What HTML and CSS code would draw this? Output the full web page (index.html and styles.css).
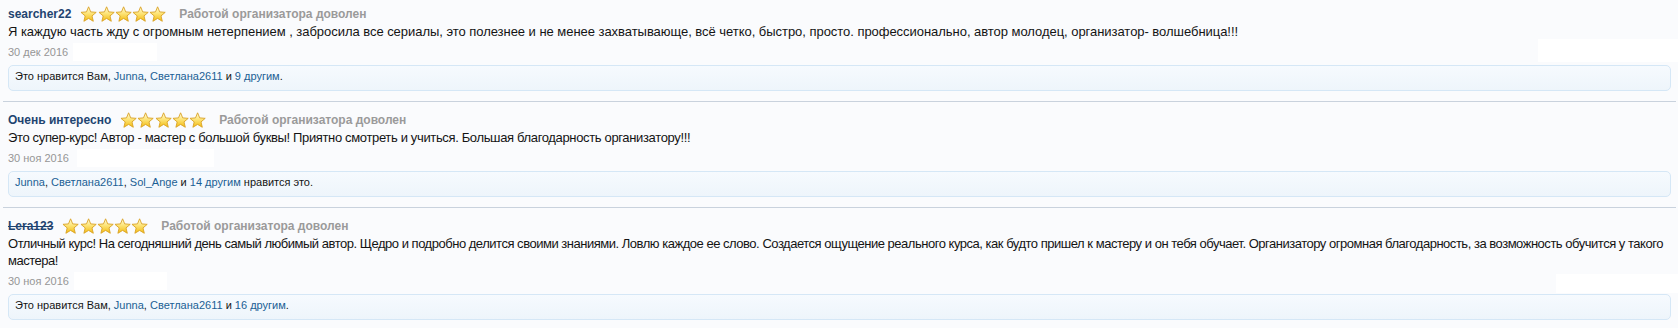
FILE: index.html
```html
<!DOCTYPE html>
<html lang="ru">
<head>
    <meta charset="UTF-8">
    <title>Отзывы</title>
    <link rel="stylesheet" href="styles.css">
</head>
<body>
    <!-- градиент для звёзд -->
    <svg class="defs" width="0" height="0">
        <defs>
            <linearGradient id="starFill" x1="0" y1="0" x2="0" y2="1">
                <stop offset="0" stop-color="#fffde0"/>
                <stop offset="0.45" stop-color="#fde57a"/>
                <stop offset="1" stop-color="#f3bb12"/>
            </linearGradient>
        </defs>
    </svg>

    <ol class="reviews">
        <li class="review">
            <div class="review-head">
                <a class="author">searcher22</a>
                <span class="stars">
                    <svg viewBox="0 0 17 16"><polygon points="8.5,0.8 10.62,5.89 16.11,6.33 11.92,9.91 13.2,15.27 8.5,12.4 3.8,15.27 5.08,9.91 0.89,6.33 6.38,5.89"/></svg>
                    <svg viewBox="0 0 17 16"><polygon points="8.5,0.8 10.62,5.89 16.11,6.33 11.92,9.91 13.2,15.27 8.5,12.4 3.8,15.27 5.08,9.91 0.89,6.33 6.38,5.89"/></svg>
                    <svg viewBox="0 0 17 16"><polygon points="8.5,0.8 10.62,5.89 16.11,6.33 11.92,9.91 13.2,15.27 8.5,12.4 3.8,15.27 5.08,9.91 0.89,6.33 6.38,5.89"/></svg>
                    <svg viewBox="0 0 17 16"><polygon points="8.5,0.8 10.62,5.89 16.11,6.33 11.92,9.91 13.2,15.27 8.5,12.4 3.8,15.27 5.08,9.91 0.89,6.33 6.38,5.89"/></svg>
                    <svg viewBox="0 0 17 16"><polygon points="8.5,0.8 10.62,5.89 16.11,6.33 11.92,9.91 13.2,15.27 8.5,12.4 3.8,15.27 5.08,9.91 0.89,6.33 6.38,5.89"/></svg>
                </span>
                <span class="verdict">Работой организатора доволен</span>
            </div>
            <div class="message">Я каждую часть жду с огромным нетерпением , забросила все сериалы, это полезнее и не менее захватывающе, всё четко, быстро, просто. профессионально, автор молодец, организатор- волшебница!!!</div>
            <div class="meta">
                <span class="date">30 дек 2016</span>
                <span class="blank blank-1"></span>
                <span class="blank blank-r1"></span>
            </div>
            <div class="likes">Это нравится Вам, <a>Junna</a>, <a>Светлана2611</a> и <a>9 другим</a>.</div>
        </li>

        <li class="review">
            <div class="review-head">
                <a class="author">Очень интересно</a>
                <span class="stars">
                    <svg viewBox="0 0 17 16"><polygon points="8.5,0.8 10.62,5.89 16.11,6.33 11.92,9.91 13.2,15.27 8.5,12.4 3.8,15.27 5.08,9.91 0.89,6.33 6.38,5.89"/></svg>
                    <svg viewBox="0 0 17 16"><polygon points="8.5,0.8 10.62,5.89 16.11,6.33 11.92,9.91 13.2,15.27 8.5,12.4 3.8,15.27 5.08,9.91 0.89,6.33 6.38,5.89"/></svg>
                    <svg viewBox="0 0 17 16"><polygon points="8.5,0.8 10.62,5.89 16.11,6.33 11.92,9.91 13.2,15.27 8.5,12.4 3.8,15.27 5.08,9.91 0.89,6.33 6.38,5.89"/></svg>
                    <svg viewBox="0 0 17 16"><polygon points="8.5,0.8 10.62,5.89 16.11,6.33 11.92,9.91 13.2,15.27 8.5,12.4 3.8,15.27 5.08,9.91 0.89,6.33 6.38,5.89"/></svg>
                    <svg viewBox="0 0 17 16"><polygon points="8.5,0.8 10.62,5.89 16.11,6.33 11.92,9.91 13.2,15.27 8.5,12.4 3.8,15.27 5.08,9.91 0.89,6.33 6.38,5.89"/></svg>
                </span>
                <span class="verdict">Работой организатора доволен</span>
            </div>
            <div class="message narrow">Это супер-курс! Автор - мастер с большой буквы! Приятно смотреть и учиться. Большая благодарность организатору!!!</div>
            <div class="meta">
                <span class="date">30 ноя 2016</span>
                <span class="blank blank-2"></span>
            </div>
            <div class="likes"><a>Junna</a>, <a>Светлана2611</a>, <a>Sol_Ange</a> и <a>14 другим</a> нравится это.</div>
        </li>

        <li class="review">
            <div class="review-head">
                <a class="author deleted">Lera123</a>
                <span class="stars">
                    <svg viewBox="0 0 17 16"><polygon points="8.5,0.8 10.62,5.89 16.11,6.33 11.92,9.91 13.2,15.27 8.5,12.4 3.8,15.27 5.08,9.91 0.89,6.33 6.38,5.89"/></svg>
                    <svg viewBox="0 0 17 16"><polygon points="8.5,0.8 10.62,5.89 16.11,6.33 11.92,9.91 13.2,15.27 8.5,12.4 3.8,15.27 5.08,9.91 0.89,6.33 6.38,5.89"/></svg>
                    <svg viewBox="0 0 17 16"><polygon points="8.5,0.8 10.62,5.89 16.11,6.33 11.92,9.91 13.2,15.27 8.5,12.4 3.8,15.27 5.08,9.91 0.89,6.33 6.38,5.89"/></svg>
                    <svg viewBox="0 0 17 16"><polygon points="8.5,0.8 10.62,5.89 16.11,6.33 11.92,9.91 13.2,15.27 8.5,12.4 3.8,15.27 5.08,9.91 0.89,6.33 6.38,5.89"/></svg>
                    <svg viewBox="0 0 17 16"><polygon points="8.5,0.8 10.62,5.89 16.11,6.33 11.92,9.91 13.2,15.27 8.5,12.4 3.8,15.27 5.08,9.91 0.89,6.33 6.38,5.89"/></svg>
                </span>
                <span class="verdict">Работой организатора доволен</span>
            </div>
            <div class="message narrower">Отличный курс! На сегодняшний день самый любимый автор. Щедро и подробно делится своими знаниями. Ловлю каждое ее слово. Создается ощущение реального курса, как будто пришел к мастеру и он тебя обучает. Организатору огромная благодарность, за возможность обучится у такого мастера!</div>
            <div class="meta">
                <span class="date">30 ноя 2016</span>
                <span class="blank blank-3"></span>
                <span class="blank blank-r3"></span>
            </div>
            <div class="likes">Это нравится Вам, <a>Junna</a>, <a>Светлана2611</a> и <a>16 другим</a>.</div>
        </li>
    </ol>
</body>
</html>
```

FILE: styles.css
```css
* {
    margin: 0;
    padding: 0;
    box-sizing: border-box;
}

body {
    font-family: "Liberation Sans", Arial, sans-serif;
    background: #fafbfd;
    color: #141414;
    overflow: hidden;
}

.defs {
    position: absolute;
}

/* список отзывов */
.reviews {
    list-style: none;
    margin: 0 2px 0 3px;
}

.review {
    padding: 9px 5px 10px;
    border-bottom: 1px solid #c9d2dd;
}

.review:first-child {
    padding-top: 5px;
}

/* заголовок: автор, звёзды, оценка */
.review-head {
    display: flex;
    align-items: center;
    height: 18px;
    font-size: 12px;
    font-weight: bold;
}

.author {
    color: #1f4470;
}

.author.deleted {
    text-decoration: line-through;
}

.stars {
    display: flex;
    margin-left: 9px;
    margin-right: 13px;
}

.stars svg {
    width: 17.2px;
    height: 16px;
    display: block;
}

.stars polygon {
    fill: url(#starFill);
    stroke: #d9a124;
    stroke-width: 0.9;
    stroke-linejoin: round;
}

.verdict {
    color: #9a9a9a;
}

/* текст отзыва */
.message {
    font-size: 13px;
    line-height: 17px;
    letter-spacing: -0.04px;
}

.message.narrow {
    letter-spacing: -0.35px;
}

.message.narrower {
    letter-spacing: -0.48px;
}

/* дата */
.meta {
    display: flex;
    align-items: center;
    height: 16px;
    margin-top: 4px;
    font-size: 11px;
    color: #969696;
}

.blank {
    background: #fff;
    height: 18px;
}

.blank-1 {
    width: 84px;
    margin-left: 5px;
}

.blank-2 {
    width: 137px;
    margin-left: 8px;
}

.blank-3 {
    width: 93px;
    margin-left: 5px;
}

.blank-r1 {
    width: 140px;
    height: 23px;
    margin-left: auto;
    margin-right: -7px;
    transform: translateY(-2px);
}

.blank-r3 {
    width: 122px;
    height: 19px;
    margin-left: auto;
    margin-right: -7px;
    transform: translateY(2px);
}

/* блок лайков */
.likes {
    margin-top: 5px;
    padding: 3px 6px 7px;
    line-height: 14px;
    font-size: 11px;
    border: 1px solid #d5e7f6;
    border-radius: 5px;
    background: linear-gradient(180deg, #f6fafe 0%, #eef5fb 100%);
}

.likes a {
    color: #1b5f94;
}
```
